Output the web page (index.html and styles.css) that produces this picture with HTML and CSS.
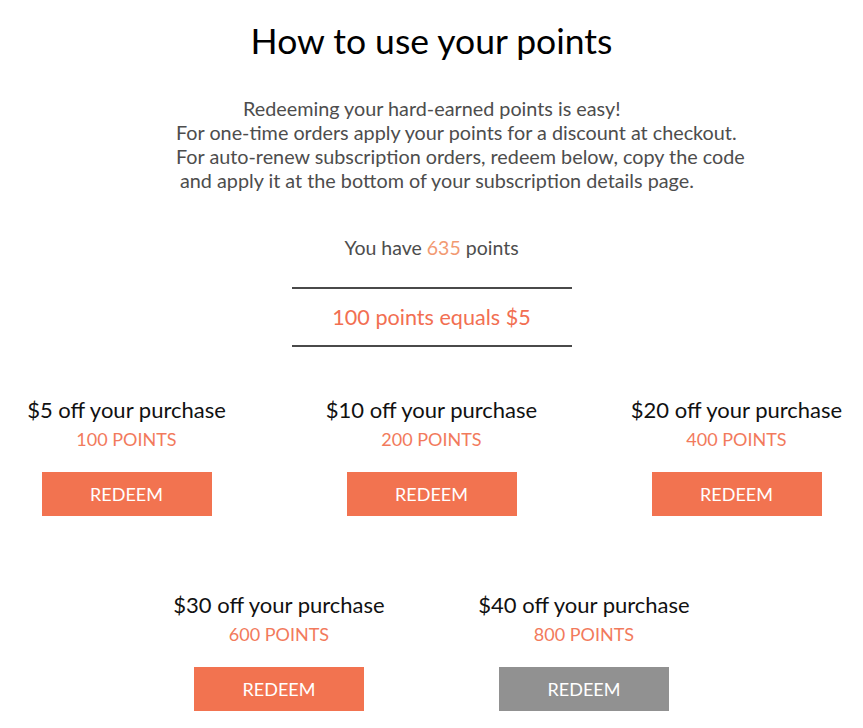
FILE: index.html
```html
<!DOCTYPE html>
<html lang="en">
<head>
  <meta charset="UTF-8">
  <meta name="viewport" content="width=device-width, initial-scale=1.0">
  <title>How to use your points</title>
  <link rel="stylesheet" href="styles.css">
</head>
<body>
  <div class="rewards">
    <h1 class="rewards-title">How to use your points</h1>

    <p class="intro">
      <span class="intro-line intro-first">Redeeming your hard-earned points is easy!</span>
      <span class="intro-line">For one-time orders apply your points for a discount at checkout.</span>
      <span class="intro-line">For auto-renew subscription orders, redeem below, copy the code</span>
      <span class="intro-line intro-last">and apply it at the bottom of your subscription details page.</span>
    </p>

    <p class="balance">You have <span class="balance-num">635</span> points</p>

    <div class="rate">100 points equals $5</div>

    <div class="offer-row">
      <div class="offer">
        <div class="offer-name">$5 off your purchase</div>
        <div class="offer-cost">100 POINTS</div>
        <button class="redeem">REDEEM</button>
      </div>
      <div class="offer">
        <div class="offer-name">$10 off your purchase</div>
        <div class="offer-cost">200 POINTS</div>
        <button class="redeem">REDEEM</button>
      </div>
      <div class="offer">
        <div class="offer-name">$20 off your purchase</div>
        <div class="offer-cost">400 POINTS</div>
        <button class="redeem">REDEEM</button>
      </div>
    </div>

    <div class="offer-row">
      <div class="offer">
        <div class="offer-name">$30 off your purchase</div>
        <div class="offer-cost">600 POINTS</div>
        <button class="redeem">REDEEM</button>
      </div>
      <div class="offer">
        <div class="offer-name">$40 off your purchase</div>
        <div class="offer-cost">800 POINTS</div>
        <button class="redeem" disabled>REDEEM</button>
      </div>
    </div>
  </div>
</body>
</html>
```

FILE: styles.css
```css
:root { --orange:#f27350; --peach:#f29a72; --ink:#111; --text:#4d4d4d; --rule:#4a4a4a; }
html,body{margin:0;overflow-x:hidden;}
body{background:#fff;font-family:Lato,"Open Sans",sans-serif;color:var(--ink);}
.rewards{padding-top:19px;text-align:center;}
.rewards-title{margin:0;font-size:35.5px;line-height:44px;font-weight:400;color:#000;}
.intro{margin:33px 0 0 176px;text-align:left;font-size:19.8px;line-height:24px;color:var(--text);}
.intro-line{display:block;}
.intro-first{padding-left:67px;}
.intro-last{padding-left:4px;}
.balance{margin:44px 0 0;font-size:19.5px;line-height:24px;color:var(--text);}
.balance-num{color:var(--peach);}
.rate{width:280px;margin:27px auto 0;padding:16px 0;border-top:2px solid var(--rule);border-bottom:2px solid var(--rule);font-size:21.6px;line-height:24px;color:#f26f52;}
.offer-row{display:flex;justify-content:center;margin-top:51px;}
.offer-row + .offer-row{margin-top:77px;}
.offer{flex:0 0 305px;display:flex;flex-direction:column;align-items:center;}
.offer-name{font-size:22px;line-height:24px;}
.offer-cost{margin-top:7px;font-size:18px;line-height:20px;color:#f27a5c;}
.redeem{margin-top:23px;width:170px;height:44px;border:none;border-radius:0;background:var(--orange);color:#fff;font-family:inherit;font-size:18px;cursor:pointer;}
.redeem[disabled]{background:#919191;cursor:not-allowed;}
```
